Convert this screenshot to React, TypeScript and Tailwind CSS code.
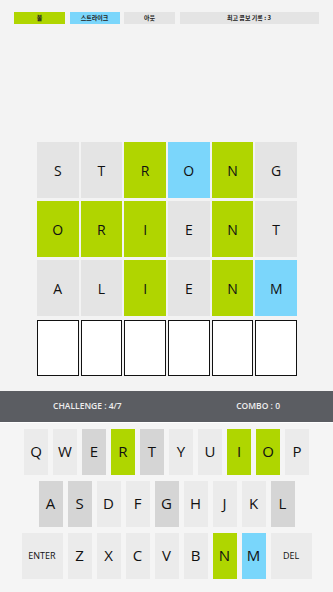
import React from "react";

type C = "g" | "y" | "b" | "e";

const rows: { l: string; c: C }[][] = [
  [
    { l: "S", c: "g" },
    { l: "T", c: "g" },
    { l: "R", c: "y" },
    { l: "O", c: "b" },
    { l: "N", c: "y" },
    { l: "G", c: "g" },
  ],
  [
    { l: "O", c: "y" },
    { l: "R", c: "y" },
    { l: "I", c: "y" },
    { l: "E", c: "g" },
    { l: "N", c: "y" },
    { l: "T", c: "g" },
  ],
  [
    { l: "A", c: "g" },
    { l: "L", c: "g" },
    { l: "I", c: "y" },
    { l: "E", c: "g" },
    { l: "N", c: "y" },
    { l: "M", c: "b" },
  ],
  [
    { l: "", c: "e" },
    { l: "", c: "e" },
    { l: "", c: "e" },
    { l: "", c: "e" },
    { l: "", c: "e" },
    { l: "", c: "e" },
  ],
];

const tileCls: Record<C, string> = {
  g: "bg-[#e4e4e4]",
  y: "bg-[#b0d500]",
  b: "bg-[#7bd6fb]",
  e: "bg-white border-[1.5px] border-[#111]",
};

type K = "l" | "d" | "y" | "b";
const keyCls: Record<K, string> = {
  l: "bg-[#ebebeb]",
  d: "bg-[#d5d5d5]",
  y: "bg-[#afd600]",
  b: "bg-[#79d6fb]",
};

const kb: { l: string; c: K; w?: boolean }[][] = [
  [
    { l: "Q", c: "l" },
    { l: "W", c: "l" },
    { l: "E", c: "d" },
    { l: "R", c: "y" },
    { l: "T", c: "d" },
    { l: "Y", c: "l" },
    { l: "U", c: "l" },
    { l: "I", c: "y" },
    { l: "O", c: "y" },
    { l: "P", c: "l" },
  ],
  [
    { l: "A", c: "d" },
    { l: "S", c: "d" },
    { l: "D", c: "l" },
    { l: "F", c: "l" },
    { l: "G", c: "d" },
    { l: "H", c: "l" },
    { l: "J", c: "l" },
    { l: "K", c: "l" },
    { l: "L", c: "d" },
  ],
  [
    { l: "ENTER", c: "l", w: true },
    { l: "Z", c: "l" },
    { l: "X", c: "l" },
    { l: "C", c: "l" },
    { l: "V", c: "l" },
    { l: "B", c: "l" },
    { l: "N", c: "y" },
    { l: "M", c: "b" },
    { l: "DEL", c: "l", w: true },
  ],
];

export default function App() {
  return (
    <div
      className="w-[333px] h-[592px] bg-[#f3f3f3] flex flex-col overflow-hidden"
      style={{ fontFamily: '"Open Sans", "Noto Sans", "Noto Sans CJK KR", sans-serif' }}
    >
      <div
        className="flex pt-[12px] pl-[14px] gap-[4.5px] text-[6px] font-bold text-[#222]"
        style={{ fontFamily: '"Noto Sans CJK KR", "Noto Sans", sans-serif' }}
      >
        <div className="w-[51px] h-[12px] bg-[#b0d500] flex items-center justify-center leading-none">볼</div>
        <div className="w-[50px] h-[12px] bg-[#7bd6fb] flex items-center justify-center leading-none">스트라이크</div>
        <div className="w-[51px] h-[12px] bg-[#e4e4e4] flex items-center justify-center leading-none">아웃</div>
        <div className="w-[139px] h-[12px] bg-[#e4e4e4] flex items-center justify-center leading-none">최고 콤보 기록 : 3</div>
      </div>

      <div className="mt-[118px] pl-[37px] grid grid-cols-[repeat(6,41.5px)] auto-rows-[56px] gap-x-[2.2px] gap-y-[3.2px]">
        {rows.flat().map((t, i) => (
          <div
            key={i}
            className={`${tileCls[t.c]} flex items-center justify-center text-[14px] text-[#111]`}
          >
            {t.l}
          </div>
        ))}
      </div>

      <div className="mt-[15px] h-[31px] bg-[#5b5d62] flex items-center justify-between px-[53px] text-[8.5px] font-semibold text-[#eeeeee]">
        <span>CHALLENGE : 4/7</span>
        <span>COMBO : 0</span>
      </div>

      <div className="flex-1 border-t-[1.5px] border-white bg-[#f5f5f5] flex flex-col items-center pt-[6px] gap-[6px]">
        {kb.map((row, ri) => (
          <div key={ri} className="flex gap-[5px]">
            {row.map((k, ki) => (
              <div
                key={ki}
                className={`${keyCls[k.c]} ${k.w ? "w-[41px] text-[9px]" : "w-[24px] text-[15px]"} h-[46px] flex items-center justify-center text-[#111] font-medium`}
              >
                {k.l}
              </div>
            ))}
          </div>
        ))}
      </div>
    </div>
  );
}
